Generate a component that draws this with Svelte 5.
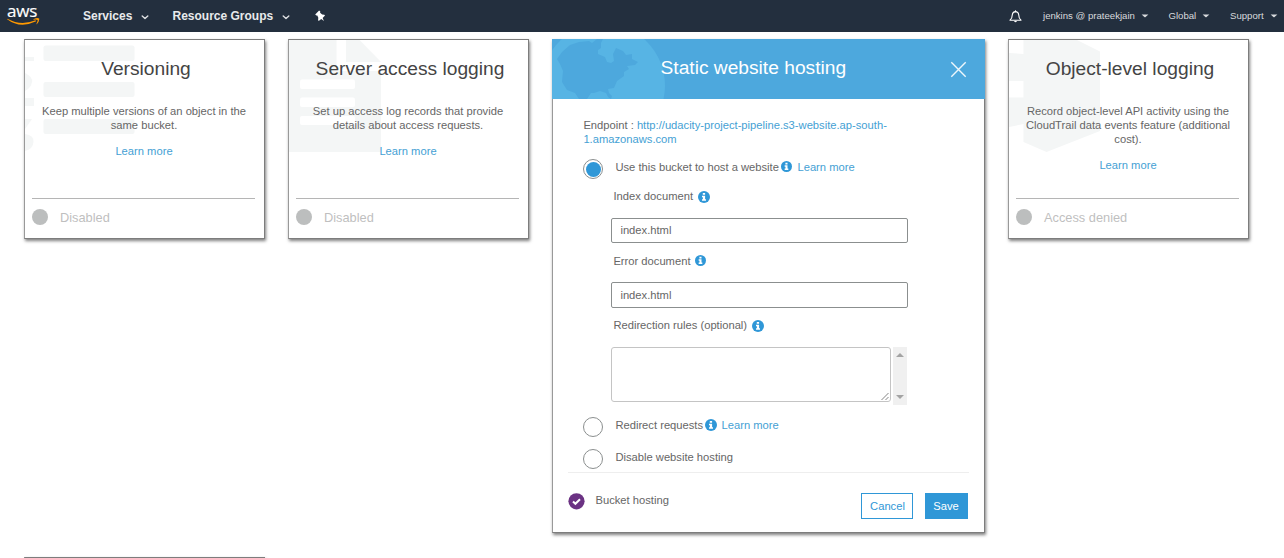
<script>
  const plain = [
    { title: 'Versioning', lines: ['Keep multiple versions of an object in the', 'same bucket.'], status: 'Disabled', art: 'versions' },
    { title: 'Server access logging', lines: ['Set up access log records that provide', 'details about access requests.'], status: 'Disabled', art: 'page' }
  ];
  const objectCard = { title: 'Object-level logging', lines: ['Record object-level API activity using the', 'CloudTrail data events feature (additional', 'cost).'], status: 'Access denied', art: 'cube' };
</script>

{#snippet caret(bold)}
  {#if bold}
    <svg class="caret" width="8" height="5" viewBox="0 0 8 5"><path d="M1.200 1 4 3.600 6.800 1" fill="none" stroke="#dfe1e4" stroke-width="1.400" stroke-linecap="round" stroke-linejoin="round" /></svg>
  {:else}
    <svg class="caret" width="8" height="4" viewBox="0 0 8 4"><path d="M.6.4H7.400L4.600 3Q4 3.500 3.400 3Z" fill="#d8dadd" /></svg>
  {/if}
{/snippet}

{#snippet info(size)}
  <svg class="info" width={size} height={size} viewBox="0 0 12 12"><circle cx="6" cy="6" r="6" fill="#2f97d7" /><path d="M4.800 1.900h2.300v1.900H4.800zM4 4.700h3.100v3.500H8v1.600H4V8.200h.9V6.200H4z" fill="#fff" /></svg>
{/snippet}

{#snippet card(c)}
  <section class="card small">
    <svg class="art" width="120" height="120" viewBox="0 0 120 120" fill="#f4f6f6">
      {#if c.art === 'versions'}
        <rect x="18.500" y="5.500" width="91" height="15.500" rx="2" />
        <rect x="18.500" y="42" width="91" height="15" rx="2" />
        <rect x="18.500" y="79" width="91" height="15" rx="2" />
        <path d="M0 17h9v4H0zM0 33Q8 37 7 42Q6 48 0 51ZM0 58h9v8H0zM0 79h7L0 89ZM0 94Q9 95 8.500 102Q8 109 0 111Z" />
      {:else if c.art === 'page'}
        <path d="M0 0h47.500v31H92v81H0z" />
        <path d="M57 0h13.500L92 22H57z" />
        <rect x="11" y="39.500" width="55" height="9.500" rx="2" fill="#fff" />
        <rect x="11" y="57.500" width="55" height="9.500" rx="2" fill="#fff" />
        <rect x="11" y="76" width="55" height="9" rx="2" fill="#fff" />
      {:else}
        <path d="M14.500 0H68L91 11.500V91L37.500 112 14.500 102V84L0 87V57.500H14.500V41H0V13L14.500 14Z" />
      {/if}
    </svg>
    <h2>{c.title}</h2>
    <p>{#each c.lines as l}<span>{l}</span>{/each}</p>
    <a class="learn" href="#learn">Learn more</a>
    <footer><i></i>{c.status}</footer>
  </section>
{/snippet}

<header class="nav">
  <div class="logo">
    <span>aws</span>
    <svg width="34" height="9" viewBox="0 0 34 9">
      <path d="M.4.700Q14 8.300 28.500 2.200L29.200 3.300Q13 11 .1 1.200Z" fill="#f90" />
      <path d="M26.300 1.200Q30.600-.6 32.200.6Q32.700 3 29.800 6.200Q29.300 6.500 29.500 5.700Q31 2.800 30.600 1.900Q29.300 1.400 26.600 1.800Z" fill="#f90" />
    </svg>
  </div>
  <span class="main services">Services{@render caret(true)}</span>
  <span class="main groups">Resource Groups{@render caret(true)}</span>
  <svg class="pin" width="11" height="12" viewBox="0 0 11 12"><path d="M4.100.4 5.300 1.600 5.100 2.700 7.200 4.600 9.300 4.800 10 5.600 7.600 7.900 9 10.900 6.200 9 3.700 10.900 3.100 10 3.300 7.700 2.300 5.500 1.300 5.600.2 4.500Z" fill="#fff" /></svg>
  <svg class="bell" width="13" height="13" viewBox="0 0 13 13"><path d="M1 10.200Q3.300 8.200 3.300 4.800Q3.600 1.800 6.500 1.600Q9.400 1.800 9.700 4.800Q9.700 8.200 12 10.200Z" fill="none" stroke="#fff" stroke-width="1.100" stroke-linejoin="round" /><path d="M6.500.3v1.500" stroke="#fff" /><path d="M5 11h3Q6.500 13.500 5 11Z" fill="#fff" /></svg>
  <span class="user">jenkins @ prateekjain{@render caret(false)}</span>
  <span class="global">Global{@render caret(false)}</span>
  <span class="support">Support{@render caret(false)}</span>
</header>

<main>
  {#each plain as c}{@render card(c)}{/each}

  <section class="card wide">
    <div class="head">
      <svg class="art" width="120" height="60" viewBox="0 0 120 60">
        <circle cx="51" cy="46.500" r="62" fill="#57b4e4" />
        <path d="M5 20 10 13 18 6 27 3 37 2 40 4 45 0H51L49 4 49 9 46 11 46 15 53 18 55 23 59 24 62 22 61 15 64 9 71 12 74 16 80 15 80 20 86 23 83 26 75 27 77 30 72 33 72 37 65 42 62 49 56 50 57 54 60 57 59 60 56 58 54 54 48 52 42 54 39 54 35 60H27L23 54 15 51 10 43 11 32 8 25Z" fill="#4da8dd" />
      </svg>
      <h2>Static website hosting</h2>
      <svg class="close" width="17" height="17" viewBox="0 0 17 17"><path d="M1.300 1.300 15.700 15.700M15.700 1.300 1.300 15.700" stroke="#fff" stroke-opacity=".9" stroke-width="1.400" /></svg>
    </div>
    <div class="form">
      <p class="endpoint">Endpoint : <a href="#site">http://udacity-project-pipeline.s3-website.ap-south-<br />1.amazonaws.com</a></p>
      <div class="option first"><i class="radio on"></i><span>Use this bucket to host a website{@render info(11)}<a href="#learn">Learn more</a></span></div>
      <div class="fields">
        <div class="label">Index document{@render info(12)}</div>
        <div class="input">index.html</div>
        <div class="label">Error document{@render info(11)}</div>
        <div class="input taller">index.html</div>
        <div class="label">Redirection rules (optional){@render info(12)}</div>
        <div class="area">
          <div class="box"><svg width="9" height="9" viewBox="0 0 9 9"><path d="M.5 8 7.500 1M4.500 8 7.500 5" stroke="#777" stroke-width=".9" /></svg></div>
          <div class="bar">
            <svg width="8" height="4" viewBox="0 0 8 4"><path d="M0 4 4 0 8 4Z" fill="#a3a3a3" /></svg>
            <svg width="8" height="4" viewBox="0 0 8 4"><path d="M0 0 4 4 8 0Z" fill="#a3a3a3" /></svg>
          </div>
        </div>
      </div>
      <div class="option second"><i class="radio"></i><span>Redirect requests{@render info(12)}<a href="#learn">Learn more</a></span></div>
      <div class="option third"><i class="radio"></i><span>Disable website hosting</span></div>
    </div>
    <div class="actions">
      <svg width="17" height="17" viewBox="0 0 17 17"><circle cx="8.500" cy="8.300" r="8.100" fill="#6b3283" /><path d="M5 8.500 7.400 10.800 12 6.300" fill="none" stroke="#fff" stroke-width="2" /></svg>
      <span>Bucket hosting</span>
      <button class="cancel">Cancel</button>
      <button class="save">Save</button>
    </div>
  </section>

  {@render card(objectCard)}
  <section class="card small next"></section>
</main>

<style>
  :global(body) { background: #fff; overflow: hidden; }
  :global(#app) { font-family: 'Liberation Sans', Arial, sans-serif; font-size: 11.2px; line-height: 14px; color: #666; height: 558px; overflow: hidden; }
  a { color: #459fd4; text-decoration: none; }
  h2 { margin: 0; font-weight: 400; font-size: 19.2px; line-height: 24px; }
  .nav { height: 32px; background: #232f3e; display: flex; align-items: center; color: #d8dadd; font-size: 9.6px; white-space: nowrap; box-sizing: border-box; }
  .logo { margin-left: 7px; width: 34px; height: 32px; flex: none; }
  .logo span { display: block; height: 18px; line-height: 22px; font-family: 'Open Sans', sans-serif; font-size: 17px; letter-spacing: -.2px; color: #fff; -webkit-text-stroke: .2px #fff; }
  .logo svg { display: block; }
  .main { font-size: 12px; font-weight: 700; color: #e8eaec; }
  .services { margin-left: 42px; width: 89.500px; }
  .groups { width: 142px; }
  .main .caret { margin: 0 0 0 9px; }
  .pin { margin-right: auto; }
  .bell { margin-right: 21px; }
  .user { width: 125.500px; }
  .global { width: 61.500px; }
  .support { width: 54px; }
  .user .caret, .global .caret, .support .caret { margin: 0 0 1px 6px; }
  main { display: grid; grid-template-columns: 241px 241px 433px 241px; gap: 24px 23px; padding: 7px 0 0 24px; align-items: start; height: 519px; }
  .card { position: relative; box-sizing: border-box; border: 1px solid #7d7d7d; border-left-color: #999; background: #fff; box-shadow: 1px 2px 3px rgba(0, 0, 0, .5); display: flex; flex-direction: column; }
  .small { height: 200px; align-items: center; text-align: center; }
  .art { position: absolute; left: 0; top: 0; }
  .small h2, .small p, .small .learn, .small footer { position: relative; }
  .small h2 { color: #444; padding: 17px 0 0 3px; white-space: nowrap; }
  .small p { margin: 23px 1px 12px 0; }
  .small .learn { margin-right: 1px; }
  .small p span { display: block; white-space: nowrap; }
  .small footer { margin: auto 2px 0 0; width: 223px; height: 40px; box-sizing: border-box; border-top: 1px solid #b5b5b5; display: flex; align-items: center; padding-bottom: 2px; font-size: 12.800px; color: #bfbfbf; }
  .small footer i { width: 16px; height: 16px; border-radius: 50%; background: #bcbebe; margin: 0 12px 1px 0; }
  .wide { height: 494px; }
  .head { margin: -1px -1px 0; height: 60px; background: #4da8dd; position: relative; display: flex; align-items: center; justify-content: space-between; overflow: hidden; color: #fff; box-sizing: border-box; padding: 0 18px 2px 108.500px; }
  .head h2 { position: relative; }
  .close { margin-top: 2px; }
  .form { margin: 0 15px; height: 354px; border-bottom: 1px solid #eee; padding: 19px 0 0 15.400px; }
  .endpoint { margin: 0 0 13px; white-space: nowrap; }
  .option { display: flex; height: 20px; }
  .option span { margin: 1px 0 0 12px; height: 14px; white-space: nowrap; display: flex; }
  .option .info { margin: 1px 5.500px 0 2px; }
  .second .info { margin-right: 4.500px; }
  .radio { box-sizing: border-box; width: 20px; height: 20px; border: 1px solid #8b8f8f; border-radius: 50%; flex: none; }
  .on { background: #2f97d7; background-clip: content-box; padding: 1.500px; }
  .fields { padding-left: 28px; }
  .label { height: 14px; padding-left: 2px; display: flex; }
  .fields .info { margin: 1px 0 0 4.500px; }
  .label:first-child { margin-top: 10px; }
  .label:first-child .info { margin-top: 2px; }
  .label:nth-child(5) .info { margin-top: 2px; }
  .input { box-sizing: border-box; width: 297px; height: 25px; border: 1px solid #8b8f8f; border-radius: 2px; margin: 15px 0 11px; padding: 4px 8px; }
  .taller { height: 26px; margin: 14px 0 10px; padding-top: 5px; }
  .area { display: flex; gap: 2px; margin-top: 15px; height: 58px; }
  .box { box-sizing: border-box; width: 280px; height: 55px; border: 1px solid #c4c4c4; border-radius: 3px; display: flex; justify-content: flex-end; align-items: flex-end; }
  .bar { width: 14px; background: #f0f0f0; display: flex; flex-direction: column; justify-content: space-between; align-items: center; padding: 6px 0; box-sizing: border-box; }
  .second, .third { margin-top: 12px; }
  .actions { display: flex; align-items: flex-start; padding: 20px 16px 0 15px; }
  .actions span { margin: 0 auto 0 10.500px; }
  .actions button { font: inherit; height: 26px; border: 1px solid #2f97d7; padding: 0 0 0 1px; box-sizing: border-box; }
  .cancel { width: 52px; background: #fff; color: #2f97d7; margin-right: 12px; }
  .actions .save { width: 43px; background: #2f97d7; color: #fff; padding: 0 1px 0 0; }
</style>
